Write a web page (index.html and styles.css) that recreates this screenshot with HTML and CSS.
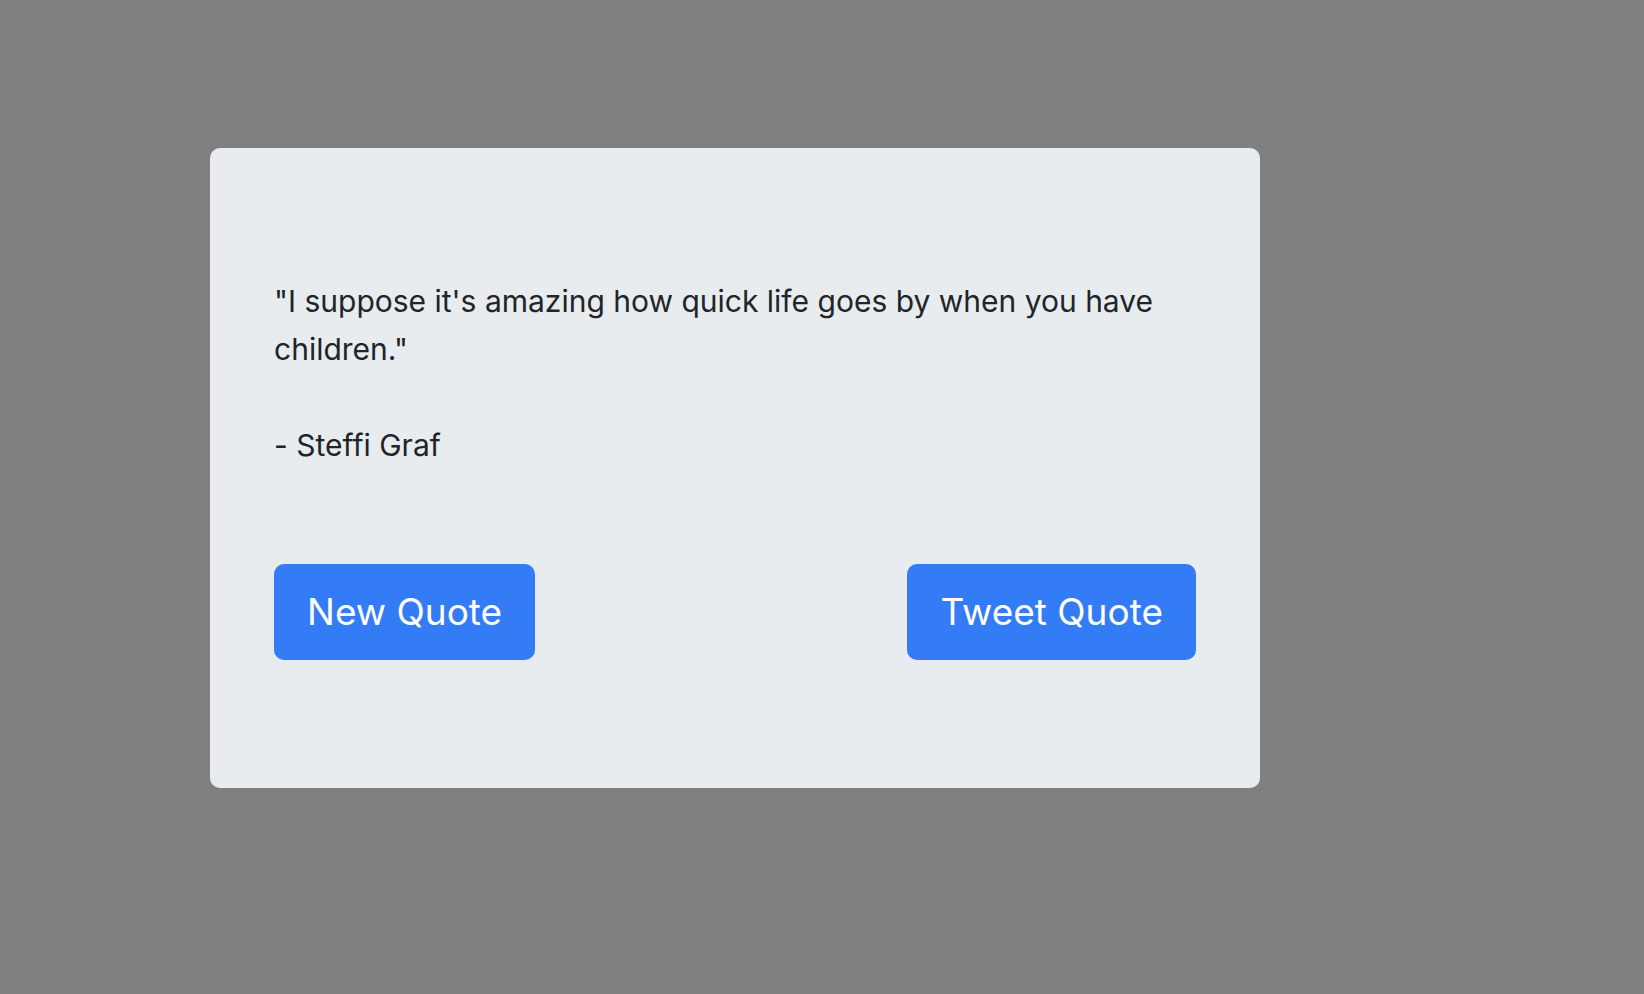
FILE: index.html
```html
<!DOCTYPE html>
<html lang="en">
<head>
<meta charset="utf-8">
<meta name="viewport" content="width=device-width, initial-scale=1">
<title>Random Quote</title>
<link rel="stylesheet" href="styles.css">
</head>
<body>
<main class="quote-box">
  <blockquote class="quote">
    <p class="quote-text">"I suppose it's amazing how quick life goes by when you have children."</p>
    <footer class="quote-author">- Steffi Graf</footer>
  </blockquote>
  <div class="actions">
    <button class="btn" type="button">New Quote</button>
    <a class="btn" href="#tweet">Tweet Quote</a>
  </div>
</main>
</body>
</html>
```

FILE: styles.css
```css
* {
  box-sizing: border-box;
}

body {
  margin: 0;
  padding: 148px 24px 48px 210px;
  background: #808080;
  color: #212529;
  font-family: Inter, "Liberation Sans", sans-serif;
  font-size: 30px;
  font-variant-ligatures: none;
  line-height: 48px;
}

.quote-box {
  max-width: 1050px;
  padding: 129px 64px 128px;
  background: #e8ecef;
  border-radius: 10px;
}

.quote {
  margin: 0 0 95px;
}

.quote-text {
  margin: 0 0 48px;
}

.actions {
  display: flex;
  flex-wrap: wrap;
  justify-content: space-between;
  gap: 24px;
}

.btn {
  padding: 18px 33px;
  border: 0;
  border-radius: 10px;
  background: #347cf6;
  color: #fff;
  font-family: inherit;
  font-size: 37px;
  line-height: 60px;
  text-decoration: none;
  cursor: pointer;
}
```
